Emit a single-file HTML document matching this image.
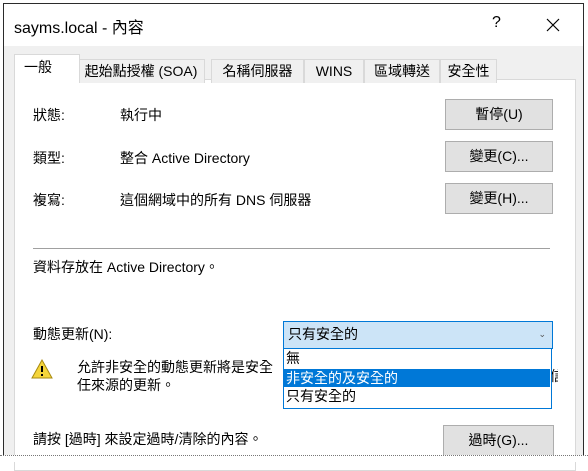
<!DOCTYPE html>
<html><head><meta charset="utf-8"><style>
body{margin:0;width:588px;height:461px;background:#fff;position:relative;overflow:hidden;font-family:"Segoe UI","Liberation Sans","Noto Sans CJK TC",sans-serif;font-size:14px;color:#000}
.a{position:absolute;white-space:nowrap}
.win{position:absolute;left:3px;top:3px;width:579px;height:452px;border:1px solid #2b2b2b;border-bottom:none;background:#f0f0f0}
.title{position:absolute;left:0;top:0;width:579px;height:42px;background:#fff}
.tab{position:absolute;top:55px;height:23px;background:#f0f0f0;border:1px solid #d9d9d9;border-bottom:none;text-align:center;line-height:22px}
.panel{position:absolute;left:10px;top:75px;width:560px;height:390px;background:#fff;border:1px solid #d9d9d9}
.btn{position:absolute;left:445px;width:106px;height:29px;background:#e1e1e1;border:1px solid #adadad;text-align:center;line-height:28px}
</style></head><body>
<div class="win">
<div class="title"></div>
<div class="a" style="left:10px;top:10px;font-size:16px">sayms.local - 內容</div>
<div class="a" style="left:488px;top:10px;font-size:16px">?</div>
<svg class="a" style="left:542px;top:14px" width="14" height="14"><path d="M1 1L13 13M13 1L1 13" stroke="#000" stroke-width="1.2"/></svg>
<div class="panel"></div>
<div class="tab" style="left:73px;width:126px">起始點授權 (SOA)</div>
<div class="tab" style="left:207px;width:91px">名稱伺服器</div>
<div class="tab" style="left:300px;width:58px">WINS</div>
<div class="tab" style="left:360px;width:74px">區域轉送</div>
<div class="tab" style="left:436px;width:55px">安全性</div>
<div class="tab" style="left:10px;top:50px;width:64px;height:28px;background:#fff;line-height:24px;text-align:left;text-indent:9px;border-color:#d9d9d9">一般</div>
</div>
<div class="a" style="left:33px;top:105px">狀態:</div><div class="a" style="left:120px;top:105px">執行中</div>
<div class="a" style="left:33px;top:148px">類型:</div><div class="a" style="left:120px;top:148px">整合 Active Directory</div>
<div class="a" style="left:33px;top:190px">複寫:</div><div class="a" style="left:120px;top:190px">這個網域中的所有 DNS 伺服器</div>
<div class="btn" style="top:99px">暫停(U)</div>
<div class="btn" style="top:141px">變更(C)...</div>
<div class="btn" style="top:183px">變更(H)...</div>
<div class="a" style="left:33px;top:248px;width:517px;height:1px;background:#a0a0a0"></div>
<div class="a" style="left:33px;top:257px">資料存放在 Active Directory。</div>
<div class="a" style="left:33px;top:324px">動態更新(N):</div>
<div class="a" style="left:283px;top:321px;width:268px;height:26px;background:#cce4f7;border:1px solid #0078d7;line-height:25px;text-indent:4px">只有安全的<span style="position:absolute;right:6px;font-size:9px;color:#555">&#8964;</span></div>
<svg class="a" style="left:31px;top:359px" width="22" height="20"><path d="M11 1L21 19H1Z" fill="#f5d53b" stroke="#a88a10"/><rect x="10" y="7" width="2" height="6" fill="#000"/><rect x="10" y="15" width="2" height="2" fill="#000"/></svg>
<div class="a" style="left:77px;top:357px">允許非安全的動態更新將是安全</div>
<div class="a" style="left:77px;top:375px">任來源的更新。</div>
<div class="a" style="left:550px;top:366px;width:8px;overflow:hidden">信</div>
<div class="a" style="left:283px;top:348px;width:267px;height:59px;background:#fff;border:1px solid #0078d7"></div>
<div class="a" style="left:286px;top:349px;line-height:19px">無</div>
<div class="a" style="left:284px;top:369px;width:266px;height:18px;background:#0078d7;color:#fff;line-height:18px;text-indent:2px">非安全的及安全的</div>
<div class="a" style="left:286px;top:387px;line-height:19px">只有安全的</div>
<div class="a" style="left:33px;top:429px">請按 [過時] 來設定過時/清除的內容。</div>
<div class="btn" style="top:425px;left:443px;width:109px">過時(G)...</div>
<div class="a" style="left:0;top:455px;width:588px;height:6px;background:#fff;border-top:1px dotted #777"></div>
</body></html>
